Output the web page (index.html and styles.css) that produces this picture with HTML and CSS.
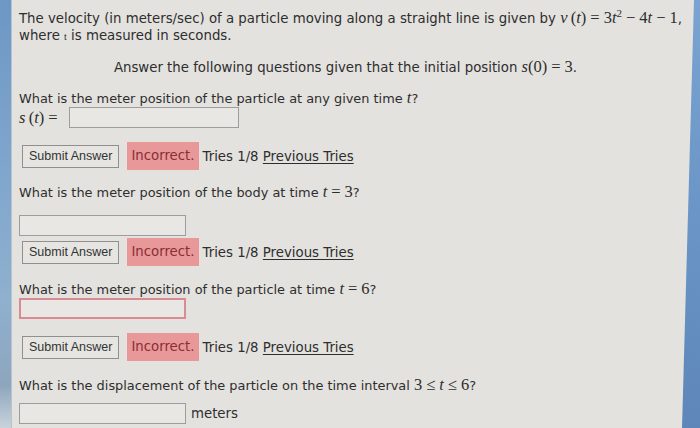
FILE: index.html
```html
<!DOCTYPE html>
<html>
<head>
<meta charset="utf-8">
<link rel="stylesheet" href="styles.css">
</head>
<body>
<div class="frame">
  <div class="edge-left"></div>
  <main class="page">
    <p class="intro">The velocity (in meters/sec) of a particle moving along a straight line is given by <span class="m"><i>v</i>&#8201;(<i>t</i>)<span class="op">=</span>3<i>t</i><sup>2</sup><span class="op">&minus;</span>4<i>t</i><span class="op">&minus;</span>1</span>,<br>where <span class="tiny">t</span> is measured in seconds.</p>
    <p class="center">Answer the following questions given that the initial position <span class="m"><i>s</i>(0)<span class="op">=</span>3</span>.</p>

    <section class="q q1">
      <p class="ask">What is the meter position of the particle at any given time <span class="m"><i>t</i></span>?</p>
      <div class="inline-row"><span class="m"><i>s</i>&#8201;(<i>t</i>)<span class="op">=</span></span><span class="box wide"></span></div>
      <div class="result"><span class="btn">Submit Answer</span><span class="bad">Incorrect.</span><span class="tries">Tries 1/8 <u>Previous Tries</u></span></div>
    </section>

    <section class="q q2">
      <p class="ask">What is the meter position of the body at time <span class="m"><i>t</i><span class="op">=</span>3</span>?</p>
      <span class="box"></span>
      <div class="result"><span class="btn">Submit Answer</span><span class="bad">Incorrect.</span><span class="tries">Tries 1/8 <u>Previous Tries</u></span></div>
    </section>

    <section class="q q3">
      <p class="ask">What is the meter position of the particle at time <span class="m"><i>t</i><span class="op">=</span>6</span>?</p>
      <span class="box red"></span>
      <div class="result"><span class="btn">Submit Answer</span><span class="bad">Incorrect.</span><span class="tries">Tries 1/8 <u>Previous Tries</u></span></div>
    </section>

    <section class="q q4">
      <p class="ask">What is the displacement of the particle on the time interval <span class="m">3<span class="op">&le;</span><i>t</i><span class="op">&le;</span>6</span>?</p>
      <div class="inline-row"><span class="box"></span><span class="unit">meters</span></div>
    </section>
  </main>
  <div class="edge-right"></div>
</div>
</body>
</html>
```
FILE: styles.css
```css
html, body {
  margin: 0;
  padding: 0;
  height: 100%;
}
body {
  background: #e3e2de;
  font-family: "DejaVu Sans", Verdana, sans-serif;
  font-size: 13.3px;
  color: #2e2e2e;
  overflow: hidden;
}
.frame {
  display: flex;
  height: 428px;
}
.edge-left {
  width: 11px;
  flex: none;
  background: linear-gradient(180deg, #6d97c4 0%, #7fa6cd 40%, #8fb0cf 70%, #8da6bd 90%, #c9d3dc 100%);
  border-right: 1px solid #b9c3cc;
}
.edge-right {
  width: 18px;
  flex: none;
  background: linear-gradient(180deg, #7aa3d1 0%, #6a95c6 50%, #5e86b8 100%);
  clip-path: polygon(12px 0, 100% 0, 100% 100%, 0 100%);
}
.page {
  flex: 1;
  padding: 10px 0 0 7px;
  display: flex;
  flex-direction: column;
}
p { margin: 0; }
.intro, .center, .ask { line-height: 17px; }
.ask { font-size: 12.9px; }
.m {
  font-family: "Liberation Serif", "Times New Roman", serif;
  font-size: 16.5px;
  line-height: 10px;
}
.op { padding: 0 4px; }
.m sup { font-size: 11px; line-height: 0; vertical-align: 6px; }
.tiny { font-family: "Liberation Serif", serif; font-size: 10px; }
.center {
  text-align: center;
  margin-top: 14px;
  padding-right: 10px;
}
.q1 { margin-top: 14px; }
.inline-row {
  display: flex;
  align-items: center;
  gap: 7px;
  height: 21px;
}
.inline-row .m { line-height: 21px; }
.box {
  display: block;
  width: 167px;
  height: 21px;
  border: 1px solid #9d9d9b;
  background: #e8e7e4;
  box-sizing: border-box;
}
.box.wide { width: 170px; }
.box.red { border: 2px solid #d98a93; }
.result {
  display: flex;
  align-items: center;
  margin: 14px 0 0 3px;
  height: 28px;
}
.btn {
  font-family: "Liberation Sans", Arial, sans-serif;
  font-size: 12.5px;
  color: #333;
  border: 1px solid #8f8f8f;
  background: #e6e5e2;
  padding: 2px 6px;
  height: 17px;
  line-height: 17px;
}
.bad {
  background: #e9989a;
  color: #8a2f34;
  padding: 0 4px;
  margin-left: 8px;
  height: 28px;
  line-height: 28px;
}
.tries {
  margin-left: 4px;
}
.tries u { text-decoration-thickness: 1px; text-underline-offset: 2px; }
.q2 { margin-top: 14px; }
.q2 .box { margin-top: 14px; }
.q2 .result { margin-top: 2px; }
.q3 { margin-top: 15px; }
.q3 .result { margin-top: 14px; }
.q4 { margin-top: 16px; }
.q4 .inline-row { margin-top: 9px; gap: 5px; }
```
